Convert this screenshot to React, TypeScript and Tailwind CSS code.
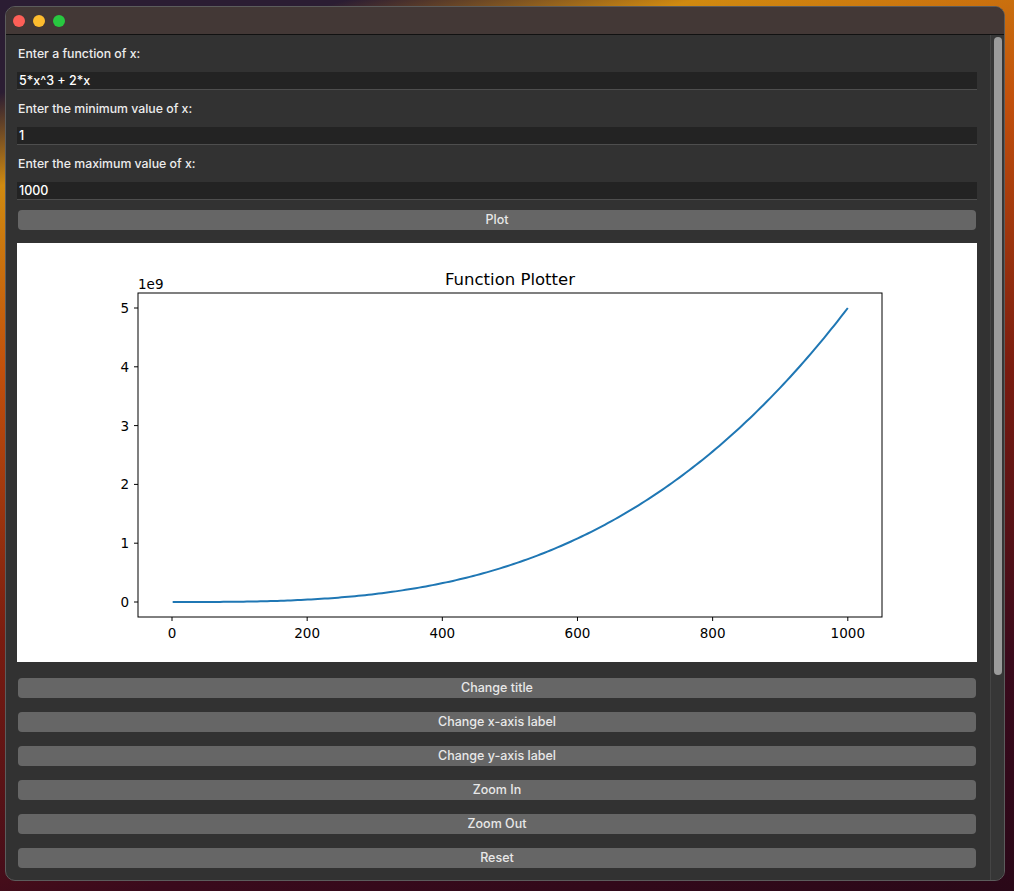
import React from "react";

const ui = { fontFamily: "Inter, 'Liberation Sans', sans-serif" };
const mpl = { fontFamily: "'DejaVu Sans', sans-serif" };

function Field({ label, value, first }: { label: string; value: string; first?: boolean }) {
  return (
    <div className={first ? "flex flex-col" : "flex flex-col mt-[11px]"}>
      <div className="h-[16px] leading-[16px] text-[12.3px] font-medium text-[#ececec] pl-[1px]">{label}</div>
      <div className="mt-[10px] h-[18px] bg-[#232323] border-b border-[#4e4e4e] text-[12.5px] font-medium leading-[17px] text-white pl-[2px]">
        {value}
      </div>
    </div>
  );
}

function Btn({ label, className = "" }: { label: string; className?: string }) {
  return (
    <div
      className={
        "ml-[1px] mr-[1px] h-[20px] rounded-[4px] bg-[#666666] text-[12.5px] font-medium leading-[20px] text-center text-[#e8e8e8] " +
        className
      }
    >
      {label}
    </div>
  );
}

function Chart() {
  // axes box in svg coords
  const x0 = 121, x1 = 865, y0 = 50, y1 = 374;
  const px = (x: number) => 155 + x * 0.6758;
  const py = (v: number) => 359 - (v / 1e9) * 58.8;
  const pts: string[] = [];
  for (let i = 0; i <= 200; i++) {
    const x = 1 + (999 * i) / 200;
    const v = 5 * x * x * x + 2 * x;
    pts.push(`${px(x).toFixed(2)},${py(v).toFixed(2)}`);
  }
  const xt = [0, 200, 400, 600, 800, 1000];
  const yt = [0, 1, 2, 3, 4, 5];
  return (
    <svg width="960" height="419" viewBox="0 0 960 419" style={mpl}>
      <rect x="0" y="0" width="960" height="419" fill="#ffffff" />
      <text x="493" y="42" textAnchor="middle" fontSize="16.5" fill="#000">
        Function Plotter
      </text>
      <text x="121" y="46" fontSize="13.5" fill="#000">
        1e9
      </text>
      <polyline points={pts.join(" ")} fill="none" stroke="#1f77b4" strokeWidth="2" />
      <rect x={x0} y={y0} width={x1 - x0} height={y1 - y0} fill="none" stroke="#000" strokeWidth="1" />
      {xt.map((t) => (
        <g key={t}>
          <line x1={px(t)} x2={px(t)} y1={y1} y2={y1 + 4} stroke="#000" strokeWidth="1" />
          <text x={px(t)} y={y1 + 21} textAnchor="middle" fontSize="13.5" fill="#000">
            {t}
          </text>
        </g>
      ))}
      {yt.map((t) => (
        <g key={t}>
          <line x1={x0 - 4} x2={x0} y1={py(t * 1e9)} y2={py(t * 1e9)} stroke="#000" strokeWidth="1" />
          <text x={x0 - 9} y={py(t * 1e9) + 5} textAnchor="end" fontSize="13.5" fill="#000">
            {t}
          </text>
        </g>
      ))}
    </svg>
  );
}

export default function App() {
  return (
    <div
      className="w-[1014px] h-[891px] overflow-hidden pt-[6px] pl-[5px] bg-[linear-gradient(165deg,#2b1d33_0%,#2b1d33_8%,#d08a10_16%,#c2500c_32%,#7a1c10_55%,#3a0a1c_80%,#2a0818_100%)]"
      style={ui}
    >
      <div className="w-[1000px] h-[875px] rounded-[10px] border border-[#5c5c5c] overflow-hidden flex flex-col bg-[#323232]">
        <div className="h-[28px] shrink-0 bg-[#433836] border-b border-[#111] flex items-center gap-[8px] pl-[7px]">
          <div className="w-[12px] h-[12px] rounded-full bg-[#fe5f57]" />
          <div className="w-[12px] h-[12px] rounded-full bg-[#febc2e]" />
          <div className="w-[12px] h-[12px] rounded-full bg-[#28c840]" />
        </div>
        <div className="flex flex-1 min-h-0">
          <div className="flex-1 flex flex-col pl-[11px] pr-[13px] pt-[11px]">
            <Field first label="Enter a function of x:" value="5*x^3 + 2*x" />
            <Field label="Enter the minimum value of x:" value="1" />
            <Field label="Enter the maximum value of x:" value="1000" />
            <Btn label="Plot" className="mt-[10px]" />
            <div className="mt-[13px] h-[419px] w-[960px]">
              <Chart />
            </div>
            <Btn label="Change title" className="mt-[16px]" />
            <Btn label="Change x-axis label" className="mt-[14px]" />
            <Btn label="Change y-axis label" className="mt-[14px]" />
            <Btn label="Zoom In" className="mt-[14px]" />
            <Btn label="Zoom Out" className="mt-[14px]" />
            <Btn label="Reset" className="mt-[14px]" />
          </div>
          <div className="w-[15px] shrink-0 border-l border-[#454545] bg-[#363636] pt-[2px] pl-[3px]">
            <div className="w-[8px] h-[638px] rounded-full bg-[#9b9b9b]" />
          </div>
        </div>
      </div>
    </div>
  );
}
